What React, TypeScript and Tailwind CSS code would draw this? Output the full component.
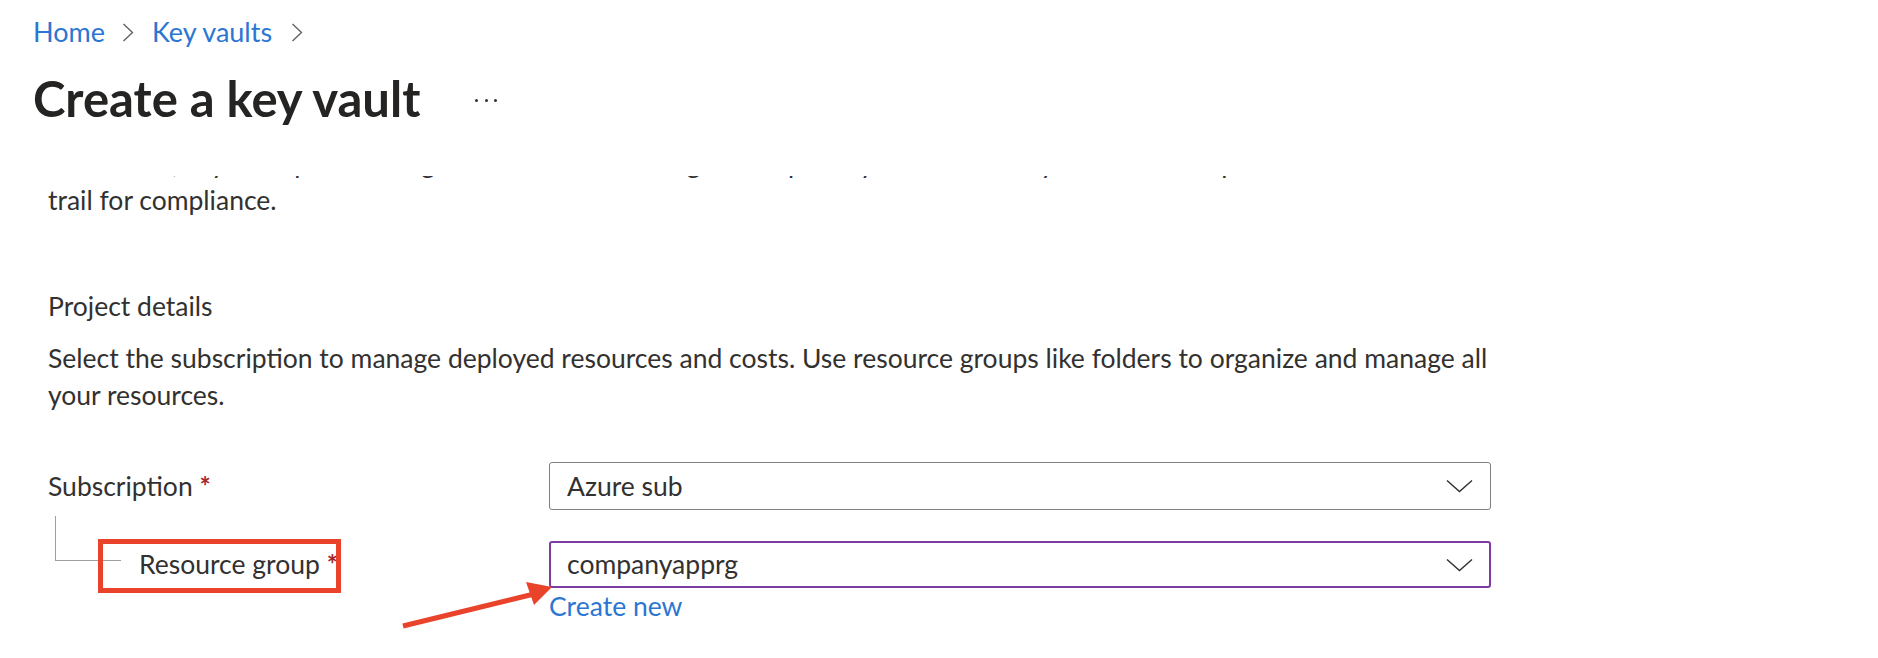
import React from "react";

function BreadChevron({ className = "" }: { className?: string }) {
  return (
    <svg className={className} width="12" height="19" viewBox="0 0 12 19" fill="none">
      <polyline points="1.5,1 10.5,9.5 1.5,18" stroke="#605e5c" strokeWidth="1.3" />
    </svg>
  );
}

function DropChevron() {
  return (
    <svg width="27" height="14" viewBox="0 0 27 14" fill="none">
      <polyline points="1,1.5 13.5,12.5 26,1.5" stroke="#323130" strokeWidth="1.4" />
    </svg>
  );
}

function Dropdown({ value, focused = false }: { value: string; focused?: boolean }) {
  return (
    <div
      className={
        focused
          ? "flex h-full w-[942px] items-center justify-between rounded-[3px] border-2 border-[#7e3ba3] pl-[16px] pr-[16px]"
          : "flex h-full w-[942px] items-center justify-between rounded-[3px] border border-[#808080] pl-[17px] pr-[17px]"
      }
    >
      <span>{value}</span>
      <DropChevron />
    </div>
  );
}

function Req() {
  return <span className="font-bold text-[#a4262c]">*</span>;
}

export default function App() {
  return (
    <div className="relative h-[658px] w-[1878px] overflow-hidden bg-white font-[Lato,'Open_Sans',sans-serif] text-[#323130]">
      <header className="pl-[33px]">
        <nav className="flex h-[64px] items-center text-[27px] text-[#2b76d2]">
          <span>Home</span>
          <BreadChevron className="ml-[17px] mr-[18px]" />
          <span>Key vaults</span>
          <BreadChevron className="ml-[19px]" />
        </nav>
        <div className="flex h-[68px] items-center">
          <h1 className="text-[49px] font-bold leading-none text-[#252423]">Create a key vault</h1>
          <div className="ml-[55px] mt-[4px] flex gap-[6.5px]">
            <span className="h-[3px] w-[3px] rounded-full bg-[#323130]" />
            <span className="h-[3px] w-[3px] rounded-full bg-[#323130]" />
            <span className="h-[3px] w-[3px] rounded-full bg-[#323130]" />
          </div>
        </div>
      </header>

      <main className="mt-[44px] w-[1491px] pl-[48px] text-[26.5px] leading-[37px]">
        <div className="flex h-[43px] flex-col justify-end overflow-hidden">
          <p className="whitespace-nowrap">
            In addition, key vault provides logs of all access and usage attempts of your secrets so you have a complete audit
          </p>
          <p>trail for compliance.</p>
        </div>

        <p className="mt-[69px]">Project details</p>
        <p className="mt-[15px] whitespace-nowrap">
          Select the subscription to manage deployed resources and costs. Use resource groups like folders to organize and manage all
          <br />
          your resources.
        </p>

        <div className="mt-[48px] flex h-[48px] items-center">
          <div className="w-[501px]">
            Subscription <Req />
          </div>
          <Dropdown value="Azure sub" />
        </div>

        <div className="mt-[31px] flex h-[47px] items-center">
          <div className="flex h-full w-[501px] items-center">
            <div className="ml-[7px] mt-[-25px] h-[45px] w-[66px] self-start border-b border-l border-[#a19f9d]" />
            <span className="ml-[18px]">
              Resource group <Req />
            </span>
          </div>
          <Dropdown value="companyapprg" focused />
        </div>

        <div className="ml-[501px] text-[#2b76d2]">Create new</div>
      </main>

      <div className="pointer-events-none absolute left-[98px] top-[539px] h-[54px] w-[243px] border-[5px] border-[#e9432b]" />

      <svg className="pointer-events-none absolute left-0 top-0" width="1878" height="658" viewBox="0 0 1878 658">
        <line x1="403" y1="626" x2="534" y2="594" stroke="#e9432b" strokeWidth="5" />
        <polygon points="552,587 526,582 534,605" fill="#e9432b" />
      </svg>
    </div>
  );
}
